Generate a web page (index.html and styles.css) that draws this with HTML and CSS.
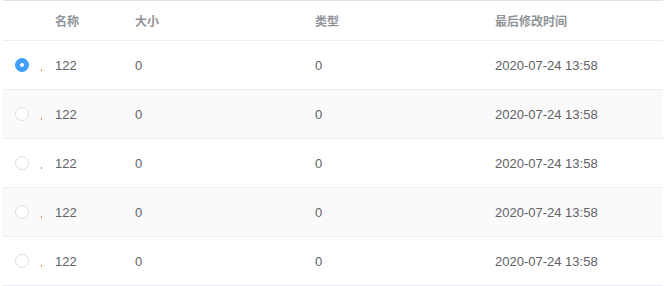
FILE: index.html
```html
<!DOCTYPE html>
<html lang="zh">
<head>
<meta charset="utf-8">
<link rel="stylesheet" href="styles.css">
</head>
<body>
<div class="table">
  <div class="row head">
    <div class="cell sel"></div>
    <div class="cell mark"></div>
    <div class="cell name">名称</div>
    <div class="cell size">大小</div>
    <div class="cell type">类型</div>
    <div class="cell time">最后修改时间</div>
  </div>
  <div class="row">
    <div class="cell sel"><span class="radio checked"></span></div>
    <div class="cell mark"><span class="dot"></span></div>
    <div class="cell name">122</div>
    <div class="cell size">0</div>
    <div class="cell type">0</div>
    <div class="cell time">2020-07-24 13:58</div>
  </div>
  <div class="row stripe">
    <div class="cell sel"><span class="radio"></span></div>
    <div class="cell mark"><span class="dot"></span></div>
    <div class="cell name">122</div>
    <div class="cell size">0</div>
    <div class="cell type">0</div>
    <div class="cell time">2020-07-24 13:58</div>
  </div>
  <div class="row">
    <div class="cell sel"><span class="radio"></span></div>
    <div class="cell mark"><span class="dot"></span></div>
    <div class="cell name">122</div>
    <div class="cell size">0</div>
    <div class="cell type">0</div>
    <div class="cell time">2020-07-24 13:58</div>
  </div>
  <div class="row stripe">
    <div class="cell sel"><span class="radio"></span></div>
    <div class="cell mark"><span class="dot"></span></div>
    <div class="cell name">122</div>
    <div class="cell size">0</div>
    <div class="cell type">0</div>
    <div class="cell time">2020-07-24 13:58</div>
  </div>
  <div class="row">
    <div class="cell sel"><span class="radio"></span></div>
    <div class="cell mark"><span class="dot"></span></div>
    <div class="cell name">122</div>
    <div class="cell size">0</div>
    <div class="cell type">0</div>
    <div class="cell time">2020-07-24 13:58</div>
  </div>
</div>
</body>
</html>
```
FILE: styles.css
```css
html, body {
  margin: 0;
  padding: 0;
  background: #fff;
}
body {
  font-family: "Liberation Sans", "Noto Sans CJK SC", sans-serif;
  font-size: 13px;
  color: #606266;
}
.table {
  margin-left: 3px;
  width: 660px;
  border-top: 1px solid #dfe2e8;
}
.row {
  display: grid;
  grid-template-columns: 37px 15px 80px 180px 180px 168px;
  height: 48px;
  border-bottom: 1px solid #ebeef5;
  align-items: center;
}
.row.head {
  height: 39px;
  color: #909399;
  font-weight: bold;
  font-family: "Noto Sans CJK SC", sans-serif;
  font-size: 12px;
}
.row.stripe {
  background: #fafafa;
}
.cell {
  display: flex;
  align-items: center;
  white-space: nowrap;
}
.sel {
  padding-left: 12px;
}
.radio {
  width: 12px;
  height: 12px;
  border: 1px solid #dcdfe6;
  border-radius: 50%;
  background: #fff;
  display: flex;
  align-items: center;
  justify-content: center;
}
.radio.checked {
  background: #409eff;
  border-color: #409eff;
}
.radio.checked::after {
  content: "";
  width: 4px;
  height: 4px;
  border-radius: 50%;
  background: #fff;
}
.mark {
  padding-left: 1px;
  height: 12px;
  align-items: flex-end;
}
.dot {
  width: 1px;
  height: 2px;
  background: #d9904a;
  margin-top: 8px;
}
```
